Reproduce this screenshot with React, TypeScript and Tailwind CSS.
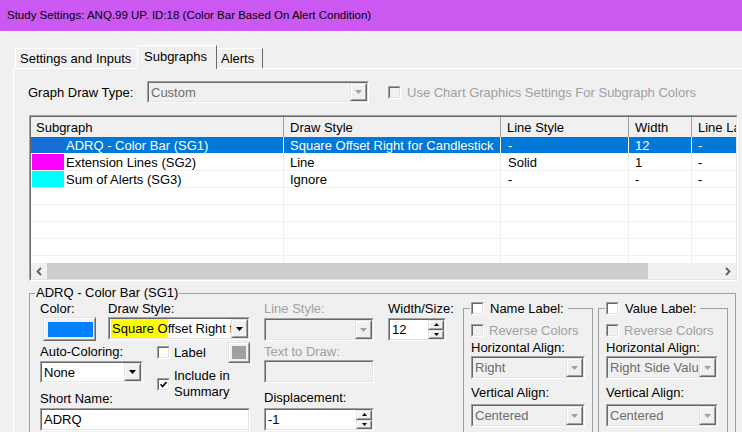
import React from "react";

type BoxProps = { className?: string; inner?: string; children?: React.ReactNode };

// classic 3D sunken edge (edit boxes, combo boxes, check boxes, list)
function Sunken({ className = "", inner = "", children }: BoxProps) {
  return (
    <div className={`border border-t-[#a0a0a0] border-l-[#a0a0a0] border-r-white border-b-white ${className}`}>
      <div className={`h-full w-full border border-t-[#696969] border-l-[#696969] border-r-[#e3e3e3] border-b-[#e3e3e3] ${inner}`}>
        {children}
      </div>
    </div>
  );
}

// classic 3D raised edge (push buttons, drop buttons, spin buttons)
function Raised({ className = "", inner = "", children }: BoxProps) {
  return (
    <div className={`border border-t-[#e3e3e3] border-l-[#e3e3e3] border-r-[#696969] border-b-[#696969] ${className}`}>
      <div className={`h-full w-full border border-t-white border-l-white border-r-[#a0a0a0] border-b-[#a0a0a0] bg-[#f0f0f0] ${inner}`}>
        {children}
      </div>
    </div>
  );
}

function DownArrow({ disabled }: { disabled?: boolean }) {
  return (
    <svg width="7" height="4" viewBox="0 0 7 4">
      <polygon points="0,0 7,0 3.5,4" fill={disabled ? "#a0a0a0" : "#000"} />
    </svg>
  );
}

function Combo({
  className = "",
  disabled,
  children,
}: {
  className?: string;
  disabled?: boolean;
  children?: React.ReactNode;
}) {
  return (
    <Sunken className={className} inner={`flex ${disabled ? "bg-[#f0f0f0]" : "bg-white"}`}>
      <div
        className={`flex-1 min-w-0 flex items-center overflow-hidden whitespace-nowrap pl-[2px] ${
          disabled ? "text-[#6d6d6d]" : "text-black"
        }`}
      >
        {children}
      </div>
      <Raised className="w-[17px] h-full shrink-0" inner="flex items-center justify-center">
        <DownArrow disabled={disabled} />
      </Raised>
    </Sunken>
  );
}

function Spin({ className = "", value }: { className?: string; value: string }) {
  return (
    <Sunken className={className} inner="flex bg-white">
      <div className="flex-1 flex items-center pl-[2px]">{value}</div>
      <div className="flex flex-col w-[16px] shrink-0">
        <Raised className="flex-1" inner="flex items-center justify-center">
          <svg width="5" height="3" viewBox="0 0 5 3">
            <polygon points="2.5,0 5,3 0,3" fill="#000" />
          </svg>
        </Raised>
        <Raised className="flex-1" inner="flex items-center justify-center">
          <svg width="5" height="3" viewBox="0 0 5 3">
            <polygon points="0,0 5,0 2.5,3" fill="#000" />
          </svg>
        </Raised>
      </div>
    </Sunken>
  );
}

function Check({ checked, disabled }: { checked?: boolean; disabled?: boolean }) {
  return (
    <Sunken
      className="w-[13px] h-[13px] shrink-0"
      inner={`flex items-center justify-center ${disabled ? "bg-[#f0f0f0]" : "bg-white"}`}
    >
      {checked && (
        <svg width="7" height="7" viewBox="0 0 7 7">
          <polyline points="0.5,3.2 2.6,5.5 6.5,1" fill="none" stroke="#000" strokeWidth="1.6" />
        </svg>
      )}
    </Sunken>
  );
}

const cols = ["w-[253px]", "w-[217px]", "w-[128px]", "w-[63px]", "w-[80px]"];

const rows = [
  { swatch: "bg-[#1470d6]", name: "ADRQ - Color Bar (SG1)", cells: ["Square Offset Right for Candlestick", "-", "12", "-"], selected: true },
  { swatch: "bg-[#ff00ff]", name: "Extension Lines (SG2)", cells: ["Line", "Solid", "1", "-"] },
  { swatch: "bg-[#00ffff]", name: "Sum of Alerts (SG3)", cells: ["Ignore", "-", "-", "-"] },
];

function LabelGroup({ title, className = "", combo1, w }: { title: string; className?: string; combo1: string; w: string }) {
  return (
    <div className={`relative mt-[7px] w-[130px] h-[130px] border border-[#a0a0a0] pl-[7px] pt-[14px] ${className}`}>
      <div className="absolute -top-[8px] left-[6px] flex items-center bg-[#f0f0f0] pl-px pr-[4px]">
        <Check />
        <span className="ml-[6px]">{title}</span>
      </div>
      <div className="flex items-center h-[15px]">
        <Check disabled />
        <span className="ml-[5px] text-[#a0a0a0]">Reverse Colors</span>
      </div>
      <div className="mt-[2px]">Horizontal Align:</div>
      <Combo className={`mt-px h-[23px] ${w}`} disabled>
        {combo1}
      </Combo>
      <div className="mt-[6px]">Vertical Align:</div>
      <Combo className={`mt-[4px] h-[23px] ${w}`} disabled>
        Centered
      </Combo>
    </div>
  );
}

export default function App() {
  return (
    <div className="w-[742px] h-[432px] overflow-hidden bg-[#f0f0f0] text-[13px] leading-[15px] text-black font-['Liberation_Sans',Arial,sans-serif]">
      <div className="h-[31px] bg-[#cb58f0] flex items-center pl-[7px] text-[11.5px] whitespace-nowrap">
        Study Settings: ANQ.99 UP. ID:18 (Color Bar Based On Alert Condition)
      </div>

      <div className="pl-[13px] pt-[14px]">
        {/* tabs */}
        <div className="flex items-end h-[23px] pl-[2px]">
          <div className="h-[20px] w-[122px] border-l border-t border-white pl-[4px] flex items-center">
            Settings and Inputs
          </div>
          <div className="relative z-10 -mb-px h-[24px] w-[80px] bg-[#f0f0f0] border-l border-t border-white border-r border-r-[#696969] pl-[6px] pb-[3px] flex items-center">
            Subgraphs
          </div>
          <div className="h-[20px] w-[46px] border-t border-white border-r border-r-[#696969] pl-[4px] flex items-center">
            Alerts
          </div>
        </div>

        {/* tab page */}
        <div className="border-l border-t border-white pl-[14px] pt-[12px]">
          <div className="flex items-center h-[22px] whitespace-nowrap">
            <div className="w-[119px]">Graph Draw Type:</div>
            <Combo className="w-[222px] h-[22px]" disabled>
              Custom
            </Combo>
            <div className="ml-[19px]">
              <Check disabled />
            </div>
            <div className="ml-[6px] text-[#a0a0a0]">Use Chart Graphics Settings For Subgraph Colors</div>
          </div>

          {/* subgraph list */}
          <Sunken className="mt-[12px] ml-px w-[709px] h-[166px]" inner="flex flex-col bg-white overflow-hidden">
            <div className="h-[20px] shrink-0 flex bg-[#f0f0f0] whitespace-nowrap">
              {["Subgraph", "Draw Style", "Line Style", "Width", "Line Label"].map((h, i) => (
                <div
                  key={h}
                  className={`${cols[i]} shrink-0 flex items-center overflow-hidden border-r border-[#a0a0a0] ${
                    i === 0 ? "pl-[5px]" : "pl-[6px]"
                  }`}
                >
                  {h}
                </div>
              ))}
            </div>
            <div className="h-[126px] shrink-0 overflow-hidden">
              {[0, 1, 2, 3, 4, 5, 6, 7].map((r) => {
                const row = rows[r];
                const sel = row?.selected;
                const line = sel ? "border-white" : "border-[#f0f0f0]";
                return (
                  <div
                    key={r}
                    className={`h-[17px] flex whitespace-nowrap ${sel ? "bg-[#0078d7] text-white" : "bg-white"}`}
                  >
                    <div className={`${cols[0]} shrink-0 flex items-start border-r border-b ${line}`}>
                      {row && (
                        <>
                          <div className={`ml-px w-[32px] h-[16px] shrink-0 ${row.swatch}`} />
                          <div className="ml-[2px] h-[16px] flex items-center">{row.name}</div>
                        </>
                      )}
                    </div>
                    {[1, 2, 3, 4].map((c) => (
                      <div
                        key={c}
                        className={`${cols[c]} shrink-0 flex items-center overflow-hidden border-r border-b pl-[6px] ${line} ${
                          c === 2 ? "pl-[7px]" : ""
                        }`}
                      >
                        {row?.cells[c - 1]}
                      </div>
                    ))}
                  </div>
                );
              })}
            </div>
            <div className="h-[16px] shrink-0 flex bg-[#f0f0f0]">
              <div className="w-[16px] shrink-0 flex items-center justify-center">
                <svg width="6" height="9" viewBox="0 0 6 9">
                  <polyline points="5,1 1.5,4.5 5,8" fill="none" stroke="#606060" strokeWidth="1.8" />
                </svg>
              </div>
              <div className="w-[601px] shrink-0 bg-[#cdcdcd]" />
              <div className="flex-1" />
              <div className="w-[17px] shrink-0 flex items-center justify-center">
                <svg width="6" height="9" viewBox="0 0 6 9">
                  <polyline points="1,1 4.5,4.5 1,8" fill="none" stroke="#606060" strokeWidth="1.8" />
                </svg>
              </div>
            </div>
          </Sunken>

          {/* selected subgraph settings */}
          <div className="relative mt-[12px] ml-px w-[707px] h-[150px] border border-[#a0a0a0] pl-[10px] pt-[7px] flex items-start whitespace-nowrap">
            <div className="absolute -top-[9px] left-[5px] px-px bg-[#f0f0f0]">ADRQ - Color Bar (SG1)</div>

            <div className="w-[210px] shrink-0">
              <div className="flex">
                <div className="w-[68px] shrink-0">
                  <div>Color:</div>
                  <Raised className="ml-[3px] mt-px w-[53px] h-[24px]" inner="pl-[3px] pr-px pt-[3px] pb-[2px]">
                    <div className="w-full h-full bg-[#0080ff]" />
                  </Raised>
                </div>
                <div className="flex-1">
                  <div>Draw Style:</div>
                  <Combo className="mt-px w-[142px] h-[23px]">
                    <div className="self-stretch flex items-center -ml-px pl-px bg-[#ffff00]">Square O</div>
                    <span>ffset Right for Candlestick</span>
                  </Combo>
                </div>
              </div>

              <div className="flex h-[42px]">
                <div className="w-[105px] shrink-0">
                  <div className="mt-[3px]">Auto-Coloring:</div>
                  <Combo className="mt-[2px] w-[103px] h-[22px]">None</Combo>
                </div>
                <div className="ml-[12px] flex-1">
                  <div className="mt-[1px] h-[21px] flex items-center">
                    <Check />
                    <span className="ml-[4px]">Label</span>
                    <div className="flex-1" />
                    <Raised className="w-[22px] h-[21px]" inner="p-[2px]">
                      <div className="w-full h-full bg-[#a0a0a0]" />
                    </Raised>
                  </div>
                  <div className="mt-[5px] flex items-center">
                    <Check checked />
                    <div className="ml-[4px] leading-[16px]">
                      Include in
                      <br />
                      Summary
                    </div>
                  </div>
                </div>
              </div>

              <div className="mt-[8px]">Short Name:</div>
              <Sunken className="mt-[2px] w-[210px] h-[23px]" inner="bg-white pl-[2px] flex items-center">
                ADRQ
              </Sunken>
            </div>

            <div className="ml-[14px] w-[110px] shrink-0">
              <div className="text-[#a0a0a0]">Line Style:</div>
              <Combo className="mt-[2px] w-[110px] h-[23px]" disabled />
              <div className="mt-[3px] text-[#a0a0a0]">Text to Draw:</div>
              <Sunken className="mt-px w-[110px] h-[23px]" inner="bg-[#f0f0f0]" />
              <div className="mt-[7px]">Displacement:</div>
              <Spin className="mt-[3px] w-[110px] h-[23px]" value="-1" />
            </div>

            <div className="ml-[14px] w-[58px] shrink-0">
              <div>Width/Size:</div>
              <Spin className="mt-[2px] w-[58px] h-[23px]" value="12" />
            </div>

            <LabelGroup title="Name Label:" className="ml-[17px] shrink-0" combo1="Right" w="w-[114px]" />
            <LabelGroup title="Value Label:" className="ml-[5px] shrink-0" combo1="Right Side Value" w="w-[112px]" />
          </div>
        </div>
      </div>
    </div>
  );
}
